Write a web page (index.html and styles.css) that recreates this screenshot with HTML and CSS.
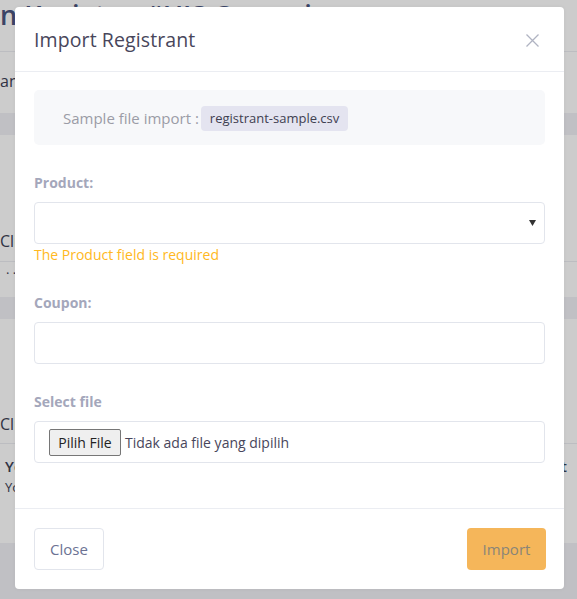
FILE: index.html
```html
<!DOCTYPE html>
<html lang="id">
<head>
<meta charset="utf-8">
<title>Import Registrant</title>
<link rel="stylesheet" href="styles.css">
</head>
<body>
<div class="page">
  <div class="page-title">n&nbsp;Kegiatan #UIS Campaign</div>
  <div class="page-sub">an</div>
  <div class="band"></div>
  <div class="page-row tall">Click</div>
  <div class="page-dots">. .<span class="dot-r">.</span></div>
  <div class="band"></div>
  <div class="page-row tall2">Click</div>
  <div class="page-foot">
    <div class="foot-line"><span>Yo</span><span>t</span></div>
    <div class="foot-small">Yo</div>
  </div>
  <div class="page-bottom"></div>
</div>
<div class="overlay"></div>

<div class="modal">
  <div class="modal-header">
    <h5 class="modal-title">Import Registrant</h5>
    <button class="modal-close" aria-label="Close">
      <svg width="13" height="13" viewBox="0 0 13 13"><path d="M0.5 0.5 L12.5 12.5 M12.5 0.5 L0.5 12.5" stroke="#b0b3c2" stroke-width="1.3" fill="none"/></svg>
    </button>
  </div>
  <div class="modal-body">
    <div class="sample">
      <span class="sample-text">Sample file import :</span><span class="badge">registrant-sample.csv</span>
    </div>
    <div class="group">
      <label class="label">Product:</label>
      <div class="control select">
        <svg class="caret" width="7" height="6" viewBox="0 0 7 6"><path d="M0 0 H7 L3.5 6 Z" fill="#333"/></svg>
      </div>
      <div class="error">The Product field is required</div>
    </div>
    <div class="group">
      <label class="label">Coupon:</label>
      <div class="control"></div>
    </div>
    <div class="group last">
      <label class="label">Select file</label>
      <div class="control file">
        <span class="file-btn">Pilih File</span><span class="file-text">Tidak ada file yang dipilih</span>
      </div>
    </div>
  </div>
  <div class="modal-footer">
    <button class="btn btn-light">Close</button>
    <button class="btn btn-warning">Import</button>
  </div>
</div>
</body>
</html>
```
FILE: styles.css
```css
* { box-sizing: border-box; }
html, body { margin: 0; padding: 0; }
body {
  width: 577px;
  height: 599px;
  overflow: hidden;
  font-family: "Open Sans", "Liberation Sans", sans-serif;
  background: #ffffff;
  position: relative;
}

/* background page */
.page {
  color: #4f5a7c;
  display: flex;
  flex-direction: column;
  height: 599px;
}
.page-title {
  font-size: 27px;
  font-weight: 600;
  line-height: 30px;
  height: 52px;
  padding-top: 0;
  border-bottom: 1px solid #ebedf2;
  color: #4a5580;
  white-space: nowrap;
  overflow: hidden;
  flex: none;
}
.page-sub {
  font-size: 16px;
  line-height: 20px;
  padding-top: 19px;
  height: 61px;
  color: #3d4156;
  flex: none;
}
.band {
  height: 22px;
  background: #f1f1f6;
  flex: none;
}
.page-row {
  font-size: 16px;
  color: #3d4156;
  display: flex;
  align-items: flex-end;
  border-bottom: 1px solid #ebedf2;
  flex: none;
}
.page-row.tall { height: 127px; padding-bottom: 9px; }
.page-row.tall2 { height: 125px; padding-bottom: 8px; }
.page-dots {
  height: 35px;
  font-size: 13px;
  line-height: 14px;
  display: flex;
  justify-content: space-between;
  padding-left: 6px;
  padding-right: 13px;
  color: #3d4156;
  flex: none;
}
.page-foot {
  height: 99px;
  padding-top: 12px;
  color: #3d4156;
  flex: none;
}
.foot-line {
  display: flex;
  justify-content: space-between;
  font-size: 15px;
  font-weight: 600;
  padding-left: 5px;
  padding-right: 10px;
}
.foot-small {
  font-size: 13px;
  padding-left: 5px;
  margin-top: 2px;
}
.page-bottom {
  flex: 1;
  background: #f1f1f6;
}
.overlay {
  position: absolute;
  inset: 0;
  background: rgba(0, 0, 0, 0.2);
}

/* modal */
.modal {
  position: absolute;
  left: 15px;
  top: 7px;
  width: 549px;
  height: 582px;
  background: #fff;
  border-radius: 4px;
  box-shadow: 0 0 4px rgba(0,0,0,0.05);
  display: flex;
  flex-direction: column;
}
.modal-header {
  height: 65px;
  padding: 0 25px 0 19px;
  display: flex;
  align-items: center;
  justify-content: space-between;
  border-bottom: 1px solid #ebedf2;
  flex: none;
}
.modal-title {
  margin: 0;
  font-size: 19.5px;
  font-weight: 500;
  color: #48465b;
  letter-spacing: 0.1px;
}
.modal-close {
  border: 0;
  background: none;
  padding: 0;
  width: 13px;
  height: 13px;
  display: flex;
  margin-top: 2px;
}
.modal-body {
  padding: 18px 19px 0;
  flex: 1;
}
.sample {
  background: #f7f8fa;
  border-radius: 5px;
  height: 55px;
  padding-left: 29px;
  display: flex;
  align-items: center;
}
.sample-text {
  font-size: 15px;
  color: #9b9ca6;
  margin-right: 2px;
}
.badge {
  background: #e4e4f0;
  border-radius: 4px;
  font-size: 13px;
  color: #3f4050;
  padding: 0 9px;
  height: 25px;
  line-height: 25px;
  margin-top: 2px;
}
.group {
  margin-top: 28px;
}
.label {
  display: block;
  font-size: 14px;
  font-weight: 700;
  color: #a4a7bb;
  line-height: 20px;
  margin-bottom: 9px;
}
.control {
  height: 42px;
  border: 1px solid #e2e5ec;
  border-radius: 4px;
  background: #fff;
}
.select {
  display: flex;
  align-items: center;
  justify-content: flex-end;
  padding-right: 8px;
}
.error {
  color: #ffb822;
  font-size: 14px;
  line-height: 20px;
  margin-top: 1px;
}
.file {
  display: flex;
  align-items: center;
  padding-left: 14px;
}
.file-btn {
  border: 1px solid #767676;
  background: #efefef;
  border-radius: 2px;
  height: 27px;
  width: 72px;
  display: flex;
  align-items: center;
  justify-content: center;
  font-size: 14px;
  color: #222;
  margin-right: 4px;
}
.file-text {
  font-size: 14px;
  color: #48465b;
}
.modal-footer {
  height: 81px;
  border-top: 1px solid #ebedf2;
  padding: 0 18px 0 19px;
  display: flex;
  align-items: center;
  justify-content: space-between;
  flex: none;
}
.btn {
  height: 42px;
  border-radius: 4px;
  font-family: inherit;
  font-size: 15px;
  padding: 0 15px;
  cursor: pointer;
}
.btn-light {
  background: #fff;
  border: 1px solid #e2e5ec;
  color: #6c7293;
  width: 70px;
}
.btn-warning {
  background: #f5b65a;
  border: 0;
  color: #8a8578;
  width: 79px;
}
```
